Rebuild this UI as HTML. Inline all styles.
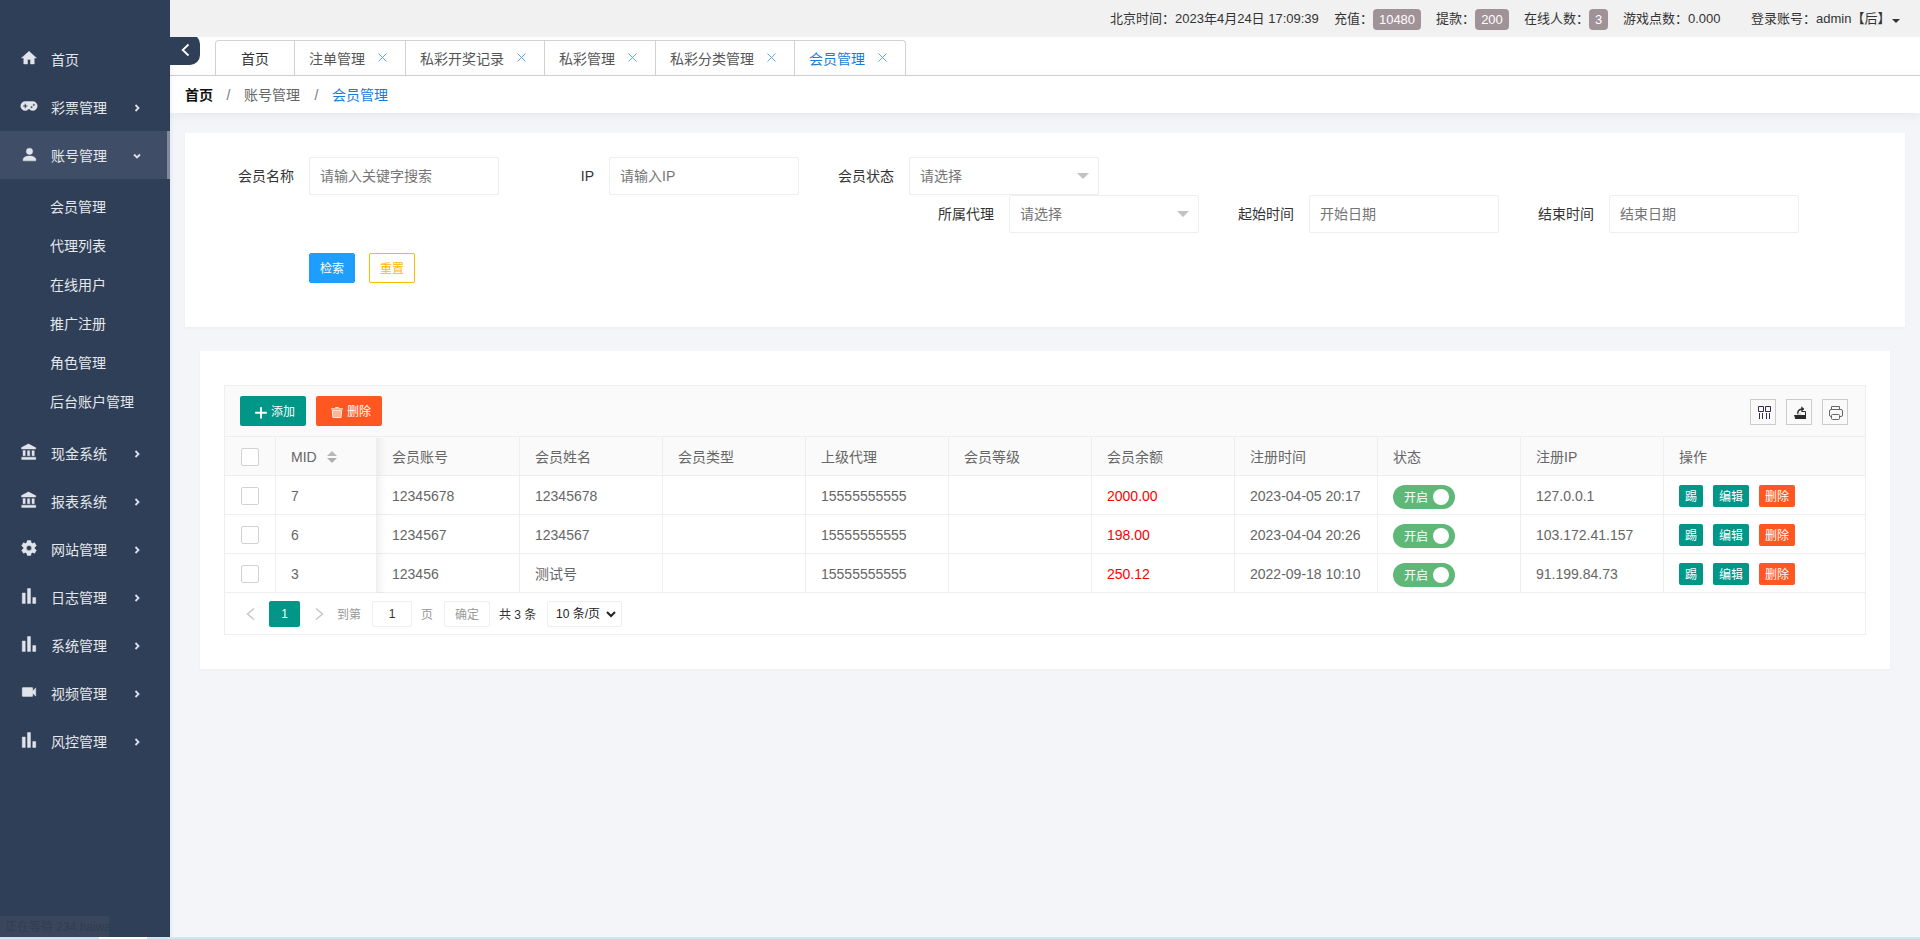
<!DOCTYPE html>
<html lang="zh-CN">
<head>
<meta charset="utf-8">
<title>会员管理</title>
<style>
*{box-sizing:border-box;margin:0;padding:0}
html,body{width:1920px;height:939px;overflow:hidden}
body{position:relative;background:#f4f5f9;font-family:"Liberation Sans","Noto Sans CJK SC",sans-serif;font-size:14px;color:#333;-webkit-font-smoothing:antialiased}
a{text-decoration:none;color:inherit}
ul{list-style:none}
.abs{position:absolute}

/* ---------- sidebar ---------- */
#side{position:absolute;left:0;top:0;width:170px;height:937px;background:#2f3f57;z-index:5;box-shadow:1px 0 4px rgba(0,0,0,.07)}
#side .it{position:absolute;left:0;width:170px;height:48px;line-height:48px;color:#e4e7ec;font-size:14px}
#side .it.on{background:#3f4e66}
#side .it .bar{position:absolute;right:0;top:0;width:3px;height:48px;background:#7f8a9b}
#side .it svg.ic{position:absolute;left:20px;top:13.5px;width:18px;height:18px;fill:#e1e4ea;stroke:#e1e4ea;stroke-width:.6;stroke-linejoin:round}
#side .it span.t{position:absolute;left:51px;top:1px}
#side .it svg.ar{position:absolute;left:132px;top:19.5px;width:10px;height:10px;fill:none;stroke:#dde0e6;stroke-width:1.8}
#side .sub{position:absolute;left:50px;height:39px;line-height:39px;color:#e4e7ec;font-size:14px;white-space:nowrap}
#status{position:absolute;left:0;top:916px;width:109px;height:21px;background:#3a465c;overflow:hidden;white-space:nowrap;color:#2f3d55;font-size:12px;line-height:23px;padding-left:5px;z-index:6}
#botline{position:absolute;left:0;top:937px;width:1920px;height:2px;background:#cfe6ef;z-index:7}
#botline i{position:absolute;left:99px;top:0;width:48px;height:2px;background:#fdfefe}

/* ---------- top bar ---------- */
#top{position:absolute;left:170px;top:0;width:1750px;height:37px;z-index:8;background:#f1f1f1;font-size:13px;color:#333;line-height:37px}
#top span{position:absolute;top:0;white-space:nowrap}
#top b{position:absolute;top:9px;height:21px;line-height:21px;border-radius:4px;background:#a09397;color:#fff;font-weight:normal;text-align:center}
#top .caret{position:absolute;left:1722px;top:19px;width:0;height:0;border-left:4px solid transparent;border-right:4px solid transparent;border-top:4px solid #333}

/* ---------- tab bar ---------- */
#tabs{position:absolute;left:170px;top:37px;width:1750px;height:39px;background:#fff;border-bottom:1px solid #d2d2d2}
#toggle{position:absolute;left:170px;top:34px;width:30px;height:31px;background:#2f3f57;border-radius:0 10px 10px 0;z-index:6}
#toggle svg{position:absolute;left:11px;top:9px;width:10px;height:14px;fill:none;stroke:#fff;stroke-width:1.8}
#tabs ul{position:absolute;left:45px;top:3px;height:36px;display:flex;border:1px solid #d2d2d2;border-bottom:none;border-radius:4px 4px 0 0}
#tabs li{height:35px;line-height:36px;border-left:1px solid #d2d2d2;color:#555;font-size:14px;position:relative;white-space:nowrap}
#tabs li:first-child{border-left:none}
#tabs li.on{color:#177ddc}
#tabs li svg{position:absolute;top:12px;width:9px;height:9px;stroke:#4a9fe8;stroke-width:1;fill:none}

/* ---------- breadcrumb ---------- */
#crumb{position:absolute;left:170px;top:76px;width:1750px;height:37px;background:#fff;box-shadow:0 2px 10px rgba(120,130,160,.12);line-height:37px;font-size:14px;color:#666}
#crumb span{position:absolute;top:1px;white-space:nowrap}

/* ---------- form card ---------- */
#fcard{position:absolute;left:185px;top:133px;width:1720px;height:194px;background:#fff;box-shadow:0 1px 2px rgba(0,0,0,.04)}
#fcard label{position:absolute;width:110px;height:38px;line-height:38px;padding-right:15px;text-align:right;color:#333;font-size:14px;white-space:nowrap}
#fcard .inp{position:absolute;width:190px;height:38px;line-height:36px;border:1px solid #eee;border-radius:2px;background:#fff;padding-left:10px;color:#757575;font-size:14px;white-space:nowrap}
#fcard .inp i{position:absolute;right:9px;top:15px;width:0;height:0;border-left:6px solid transparent;border-right:6px solid transparent;border-top:6px solid #c2c2c2}
#fcard .btn{position:absolute;top:120px;width:46px;height:30px;line-height:30px;border:1px solid transparent;border-radius:2px;font-size:12px;text-align:center;white-space:nowrap}
#fcard .b1{left:124px;background:#1e9fff;border-color:#1e9fff;color:#fff}
#fcard .b2{left:184px;background:#fff;border-color:#ffb800;color:#ffb800}

/* ---------- table card ---------- */
#tcard{position:absolute;left:200px;top:351px;width:1690px;height:318px;background:#fff;box-shadow:0 1px 2px rgba(0,0,0,.04)}
#tview{position:absolute;left:24px;top:34px;width:1642px;height:250px;border:1px solid #eee;background:#fff}
#tool{position:absolute;left:0;top:0;width:1640px;height:51px;background:#fafafa;border-bottom:1px solid #eee}
#tool .tb{position:absolute;top:10px;width:66px;height:30px;line-height:30px;border-radius:2px;color:#fff;font-size:12px;white-space:nowrap}
#tool .tb span{position:absolute;top:1px}
#tool .tb svg{position:absolute}
#tool .sq{position:absolute;top:13px;width:26px;height:26px;border:1px solid #ccc;background:#fafafa}
#tool .sq svg{position:absolute;left:0;top:0;width:24px;height:24px}
table#grid{position:absolute;left:0;top:51px;border-collapse:separate;border-spacing:0;table-layout:fixed;width:1640px;font-size:14px;color:#666}
#grid th,#grid td{height:39px;border-right:1px solid #eee;border-bottom:1px solid #eee;padding:2px 0 0 15px;text-align:left;font-weight:normal;white-space:nowrap;position:relative;line-height:36px;overflow:hidden}
#grid th{background:#fafafa}
#grid th:last-child,#grid td:last-child{border-right:none}
#grid .cb{display:block;width:18px;height:18px;border:1px solid #d2d2d2;border-radius:2px;background:#fff;position:absolute;left:16px;top:11px}
#grid .red{color:#ff0000}
#grid .sort{position:absolute;left:51px;top:13.5px;width:10px;height:12px}
#grid .sw{position:absolute;left:15px;top:9px;width:62px;height:24px;border-radius:12px;background:#5fb878;color:#fff;font-size:12px;line-height:24px}
#grid .sw span{position:absolute;left:11px;top:1px}
#grid .sw i{position:absolute;left:40px;top:4px;width:16px;height:16px;border-radius:50%;background:#fff}
#grid .ob{position:absolute;top:9px;height:22px;line-height:22px;border:1px solid transparent;border-radius:2px;color:#fff;font-size:12px;text-align:center}
#grid .g{background:#009688}
#grid .o{background:#ff5722}
#fixsh{position:absolute;left:152px;top:52px;width:10px;height:155px;background:linear-gradient(to right,rgba(0,0,0,.05),rgba(0,0,0,.02) 50%,rgba(0,0,0,0))}
#pager{position:absolute;left:0;top:208px;width:1640px;height:40px;font-size:12px;color:#333}
#pager > *{position:absolute;top:7px;height:26px;line-height:26px;white-space:nowrap}
#pager .box{border:1px solid #eee;border-radius:2px;line-height:24px;text-align:center;background:#fff}
</style>
</head>
<body>
<div id="side">
  <div class="it" style="top:35px"><svg class="ic" viewBox="0 0 24 24"><path d="M10,20V14H14V20H19V12H22L12,3L2,12H5V20H10Z"/></svg><span class="t">首页</span></div>
  <div class="it" style="top:83px"><svg class="ic" viewBox="0 0 24 24"><path d="M7,6H17A6,6 0 0,1 23,12A6,6 0 0,1 17,18C15.22,18 13.63,17.23 12.53,16H11.47C10.37,17.23 8.78,18 7,18A6,6 0 0,1 1,12A6,6 0 0,1 7,6M6,9V11H4V13H6V15H8V13H10V11H8V9H6M15.5,12A1.5,1.5 0 0,0 14,13.5A1.5,1.5 0 0,0 15.5,15A1.5,1.5 0 0,0 17,13.5A1.5,1.5 0 0,0 15.5,12M18.5,9A1.5,1.5 0 0,0 17,10.5A1.5,1.5 0 0,0 18.5,12A1.5,1.5 0 0,0 20,10.5A1.5,1.5 0 0,0 18.5,9Z"/></svg><span class="t">彩票管理</span><svg class="ar" viewBox="0 0 10 10"><path d="M3.5 2 L6.5 5 L3.5 8"/></svg></div>
  <div class="it on" style="top:131px"><i class="bar"></i><svg class="ic" style="left:19.5px;top:14px;width:19px;height:19px" viewBox="0 0 24 24"><path d="M12,4A4,4 0 0,1 16,8A4,4 0 0,1 12,12A4,4 0 0,1 8,8A4,4 0 0,1 12,4M12,14C16.42,14 20,15.79 20,18V20H4V18C4,15.79 7.58,14 12,14Z"/></svg><span class="t">账号管理</span><svg class="ar" viewBox="0 0 10 10"><path d="M2 3.5 L5 6.5 L8 3.5"/></svg></div>
  <div class="sub" style="top:188px">会员管理</div>
  <div class="sub" style="top:227px">代理列表</div>
  <div class="sub" style="top:266px">在线用户</div>
  <div class="sub" style="top:305px">推广注册</div>
  <div class="sub" style="top:344px">角色管理</div>
  <div class="sub" style="top:383px">后台账户管理</div>
  <div class="it" style="top:429px"><svg class="ic" style="top:14px" viewBox="0 0 24 24"><path d="M11.5,1L2,6V8H21V6M16,10V17H19V10M2,22H21V19H2M10,10V17H13V10M4,10V17H7V10H4Z"/></svg><span class="t">现金系统</span><svg class="ar" viewBox="0 0 10 10"><path d="M3.5 2 L6.5 5 L3.5 8"/></svg></div>
  <div class="it" style="top:477px"><svg class="ic" style="top:14px" viewBox="0 0 24 24"><path d="M11.5,1L2,6V8H21V6M16,10V17H19V10M2,22H21V19H2M10,10V17H13V10M4,10V17H7V10H4Z"/></svg><span class="t">报表系统</span><svg class="ar" viewBox="0 0 10 10"><path d="M3.5 2 L6.5 5 L3.5 8"/></svg></div>
  <div class="it" style="top:525px"><svg class="ic" style="top:13.5px" viewBox="0 0 24 24"><path d="M12,15.5A3.5,3.5 0 0,1 8.5,12A3.5,3.5 0 0,1 12,8.5A3.5,3.5 0 0,1 15.5,12A3.5,3.5 0 0,1 12,15.5M19.43,12.97C19.47,12.65 19.5,12.33 19.5,12C19.5,11.67 19.47,11.34 19.43,11L21.54,9.37C21.73,9.22 21.78,8.95 21.66,8.73L19.66,5.27C19.54,5.05 19.27,4.96 19.05,5.05L16.56,6.05C16.04,5.66 15.5,5.32 14.87,5.07L14.5,2.42C14.46,2.18 14.25,2 14,2H10C9.75,2 9.54,2.18 9.5,2.42L9.13,5.07C8.5,5.32 7.96,5.66 7.44,6.05L4.95,5.05C4.73,4.96 4.46,5.05 4.34,5.27L2.34,8.73C2.21,8.95 2.27,9.22 2.46,9.37L4.57,11C4.53,11.34 4.5,11.67 4.5,12C4.5,12.33 4.53,12.65 4.57,12.97L2.46,14.63C2.27,14.78 2.21,15.05 2.34,15.27L4.34,18.73C4.46,18.95 4.73,19.03 4.95,18.95L7.44,17.94C7.96,18.34 8.5,18.68 9.13,18.93L9.5,21.58C9.54,21.82 9.75,22 10,22H14C14.25,22 14.46,21.82 14.5,21.58L14.87,18.93C15.5,18.67 16.04,18.34 16.56,17.94L19.05,18.95C19.27,19.03 19.54,18.95 19.66,18.73L21.66,15.27C21.78,15.05 21.73,14.78 21.54,14.63L19.43,12.97Z"/></svg><span class="t">网站管理</span><svg class="ar" viewBox="0 0 10 10"><path d="M3.5 2 L6.5 5 L3.5 8"/></svg></div>
  <div class="it" style="top:573px"><svg class="ic" style="top:13.6px" viewBox="0 0 24 24"><path d="M3,22V8H7V22H3M10,22V2H14V22H10M17,22V14H21V22H17Z"/></svg><span class="t">日志管理</span><svg class="ar" viewBox="0 0 10 10"><path d="M3.5 2 L6.5 5 L3.5 8"/></svg></div>
  <div class="it" style="top:621px"><svg class="ic" style="top:13.6px" viewBox="0 0 24 24"><path d="M3,22V8H7V22H3M10,22V2H14V22H10M17,22V14H21V22H17Z"/></svg><span class="t">系统管理</span><svg class="ar" viewBox="0 0 10 10"><path d="M3.5 2 L6.5 5 L3.5 8"/></svg></div>
  <div class="it" style="top:669px"><svg class="ic" style="top:14px" viewBox="0 0 24 24"><path d="M17,10.5V7A1,1 0 0,0 16,6H4A1,1 0 0,0 3,7V17A1,1 0 0,0 4,18H16A1,1 0 0,0 17,17V13.5L21,17.5V6.5L17,10.5Z"/></svg><span class="t">视频管理</span><svg class="ar" viewBox="0 0 10 10"><path d="M3.5 2 L6.5 5 L3.5 8"/></svg></div>
  <div class="it" style="top:717px"><svg class="ic" style="top:13.6px" viewBox="0 0 24 24"><path d="M3,22V8H7V22H3M10,22V2H14V22H10M17,22V14H21V22H17Z"/></svg><span class="t">风控管理</span><svg class="ar" viewBox="0 0 10 10"><path d="M3.5 2 L6.5 5 L3.5 8"/></svg></div>
</div>
<div id="status">正在等待 234.haiwa</div>
<div id="botline"><i></i></div>

<div id="top">
  <span style="left:940px">北京时间：2023年4月24日 17:09:39</span>
  <span style="left:1164px">充值：</span><b style="left:1203px;width:48px">10480</b>
  <span style="left:1266px">提款：</span><b style="left:1305px;width:34px">200</b>
  <span style="left:1354px">在线人数：</span><b style="left:1419px;width:19px">3</b>
  <span style="left:1453px">游戏点数：0.000</span>
  <span style="left:1581px">登录账号：admin【后】</span><i class="caret"></i>
</div>
<div id="toggle"><svg viewBox="0 0 10 14"><path d="M7.5 1.5 L1.7 7 L7.5 12.5"/></svg></div>
<div id="tabs">
  <ul>
    <li style="width:78px;padding-left:25px;color:#333">首页</li>
    <li style="width:111px;padding-left:14px">注单管理<svg style="left:83px" viewBox="0 0 10 10"><path d="M0.5 0.5 L9.5 9.5 M9.5 0.5 L0.5 9.5"/></svg></li>
    <li style="width:139px;padding-left:14px">私彩开奖记录<svg style="left:111px" viewBox="0 0 10 10"><path d="M0.5 0.5 L9.5 9.5 M9.5 0.5 L0.5 9.5"/></svg></li>
    <li style="width:111px;padding-left:14px">私彩管理<svg style="left:83px" viewBox="0 0 10 10"><path d="M0.5 0.5 L9.5 9.5 M9.5 0.5 L0.5 9.5"/></svg></li>
    <li style="width:139px;padding-left:14px">私彩分类管理<svg style="left:111px" viewBox="0 0 10 10"><path d="M0.5 0.5 L9.5 9.5 M9.5 0.5 L0.5 9.5"/></svg></li>
    <li class="on" style="width:111px;padding-left:14px">会员管理<svg style="left:83px" viewBox="0 0 10 10"><path d="M0.5 0.5 L9.5 9.5 M9.5 0.5 L0.5 9.5"/></svg></li>
  </ul>
</div>
<div id="crumb">
  <span style="left:15px;color:#111;font-weight:bold">首页</span>
  <span style="left:56.5px;color:#777">/</span>
  <span style="left:74px">账号管理</span>
  <span style="left:144.5px;color:#777">/</span>
  <span style="left:162px;color:#177ddc">会员管理</span>
</div>

<div id="fcard">
  <label style="left:14px;top:24px">会员名称</label><div class="inp" style="left:124px;top:24px">请输入关键字搜索</div>
  <label style="left:314px;top:24px">IP</label><div class="inp" style="left:424px;top:24px">请输入IP</div>
  <label style="left:614px;top:24px">会员状态</label><div class="inp" style="left:724px;top:24px">请选择<i></i></div>
  <label style="left:714px;top:62px">所属代理</label><div class="inp" style="left:824px;top:62px">请选择<i></i></div>
  <label style="left:1014px;top:62px">起始时间</label><div class="inp" style="left:1124px;top:62px">开始日期</div>
  <label style="left:1314px;top:62px">结束时间</label><div class="inp" style="left:1424px;top:62px">结束日期</div>
  <div class="btn b1">检索</div>
  <div class="btn b2">重置</div>
</div>

<div id="tcard"><div id="tview">
  <div id="tool">
    <div class="tb g" style="left:15px;background:#009688"><svg style="left:15px;top:10.5px;width:12px;height:12px" viewBox="0 0 12 12"><path d="M6 0.3V11.5M0.2 5.8H11.8" stroke="#fff" stroke-width="2" fill="none"/></svg><span style="left:31px">添加</span></div>
    <div class="tb" style="left:91px;background:#ff5722"><svg style="left:15px;top:11px;width:12px;height:12px" viewBox="0 0 12 12"><path d="M4.2 0.5H7.8" stroke="#ffe9e1" stroke-width="1" fill="none"/><path d="M0 1.9H12" stroke="#ffe9e1" stroke-width="1.2" fill="none"/><path d="M1.3 3.4L1.9 10.5H10.1L10.7 3.4Z" fill="#ffb49c" stroke="#ffe9e1" stroke-width="1"/></svg><span style="left:31px">删除</span></div>
    <div class="sq" style="left:1525px"><svg viewBox="0 0 24 24"><path d="M7.5 6.5H12.5V11.5H7.5Z M14.5 6.5H19.5V11.5H14.5Z M8.5 13V19 M11.5 13V19 M15.5 13V19 M18.5 13V19" fill="none" stroke="#3a2a4a" stroke-width="1"/></svg></div>
    <div class="sq" style="left:1561px"><svg viewBox="0 0 24 24"><path d="M7 15H19V19H8.2Z" fill="#2b2b2b"/><path d="M14.5 11.5H18.5V15" fill="none" stroke="#2b2b2b" stroke-width="1"/><path d="M10.6 14.2C10.6 10.6 12 9.2 15 9.2" fill="none" stroke="#2b2b2b" stroke-width="1.4"/><path d="M14.3 6.3L17.4 9.1L14.3 11.8Z" fill="#2b2b2b"/><path d="M10.2 14H14" stroke="#bbb" stroke-width="1" fill="none"/></svg></div>
    <div class="sq" style="left:1597px"><svg viewBox="0 0 24 24"><path d="M8.5 9.5V6.5H16.5V9.5" fill="none" stroke="#666" stroke-width="1"/><rect x="6.5" y="9.5" width="13" height="7" rx="1.5" fill="none" stroke="#666" stroke-width="1"/><rect x="8.5" y="14.5" width="8" height="5" rx="1" fill="#fafafa" stroke="#666" stroke-width="1"/></svg></div>
  </div>
  <table id="grid"><colgroup><col style="width:51px"><col style="width:101px"><col style="width:143px"><col style="width:143px"><col style="width:143px"><col style="width:143px"><col style="width:143px"><col style="width:143px"><col style="width:143px"><col style="width:143px"><col style="width:143px"><col></colgroup>
  <tr><th><i class="cb"></i></th><th>MID<svg class="sort" viewBox="0 0 10 12"><path d="M5 0L10 5H0Z" fill="#b8b8b8"/><path d="M5 12L0 7H10Z" fill="#b0b0b0"/></svg></th><th>会员账号</th><th>会员姓名</th><th>会员类型</th><th>上级代理</th><th>会员等级</th><th>会员余额</th><th>注册时间</th><th>状态</th><th>注册IP</th><th>操作</th></tr>
  <tr><td><i class="cb"></i></td><td>7</td><td>12345678</td><td>12345678</td><td></td><td>15555555555</td><td></td><td class="red">2000.00</td><td>2023-04-05 20:17</td><td><div class="sw"><span>开启</span><i></i></div></td><td>127.0.0.1</td><td><div class="ob g" style="left:15px;width:24px">踢</div><div class="ob g" style="left:49px;width:36px">编辑</div><div class="ob o" style="left:95px;width:36px">删除</div></td></tr>
  <tr><td><i class="cb"></i></td><td>6</td><td>1234567</td><td>1234567</td><td></td><td>15555555555</td><td></td><td class="red">198.00</td><td>2023-04-04 20:26</td><td><div class="sw"><span>开启</span><i></i></div></td><td>103.172.41.157</td><td><div class="ob g" style="left:15px;width:24px">踢</div><div class="ob g" style="left:49px;width:36px">编辑</div><div class="ob o" style="left:95px;width:36px">删除</div></td></tr>
  <tr><td><i class="cb"></i></td><td>3</td><td>123456</td><td>测试号</td><td></td><td>15555555555</td><td></td><td class="red">250.12</td><td>2022-09-18 10:10</td><td><div class="sw"><span>开启</span><i></i></div></td><td>91.199.84.73</td><td><div class="ob g" style="left:15px;width:24px">踢</div><div class="ob g" style="left:49px;width:36px">编辑</div><div class="ob o" style="left:95px;width:36px">删除</div></td></tr>
  </table>
  <div id="fixsh"></div>
  <div id="pager">
    <svg style="left:21px;top:14px;width:10px;height:12px" viewBox="0 0 10 12"><path d="M8 0.5L1.5 6L8 11.5" fill="none" stroke="#c6c6c6" stroke-width="1.4"/></svg>
    <div style="left:44px;width:31px;background:#009688;color:#fff;text-align:center;border-radius:2px">1</div>
    <svg style="left:89px;top:14px;width:10px;height:12px" viewBox="0 0 10 12"><path d="M2 0.5L8.5 6L2 11.5" fill="none" stroke="#c6c6c6" stroke-width="1.4"/></svg>
    <span style="left:112px;color:#999;top:8px">到第</span>
    <div class="box" style="left:147px;width:40px;color:#333">1</div>
    <span style="left:196px;color:#999;top:8px">页</span>
    <div class="box" style="left:219px;width:46px;color:#999;line-height:26px">确定</div>
    <span style="left:274px;color:#333;top:8px">共 3 条</span>
    <div class="box" style="left:322px;width:75px;text-align:left;padding-left:8px;color:#222">10 条/页<svg style="position:absolute;left:58px;top:9px;width:10px;height:7px" viewBox="0 0 10 7"><path d="M1 1L5 5L9 1" fill="none" stroke="#222" stroke-width="2"/></svg></div>
  </div>
</div></div>

</body>
</html>
